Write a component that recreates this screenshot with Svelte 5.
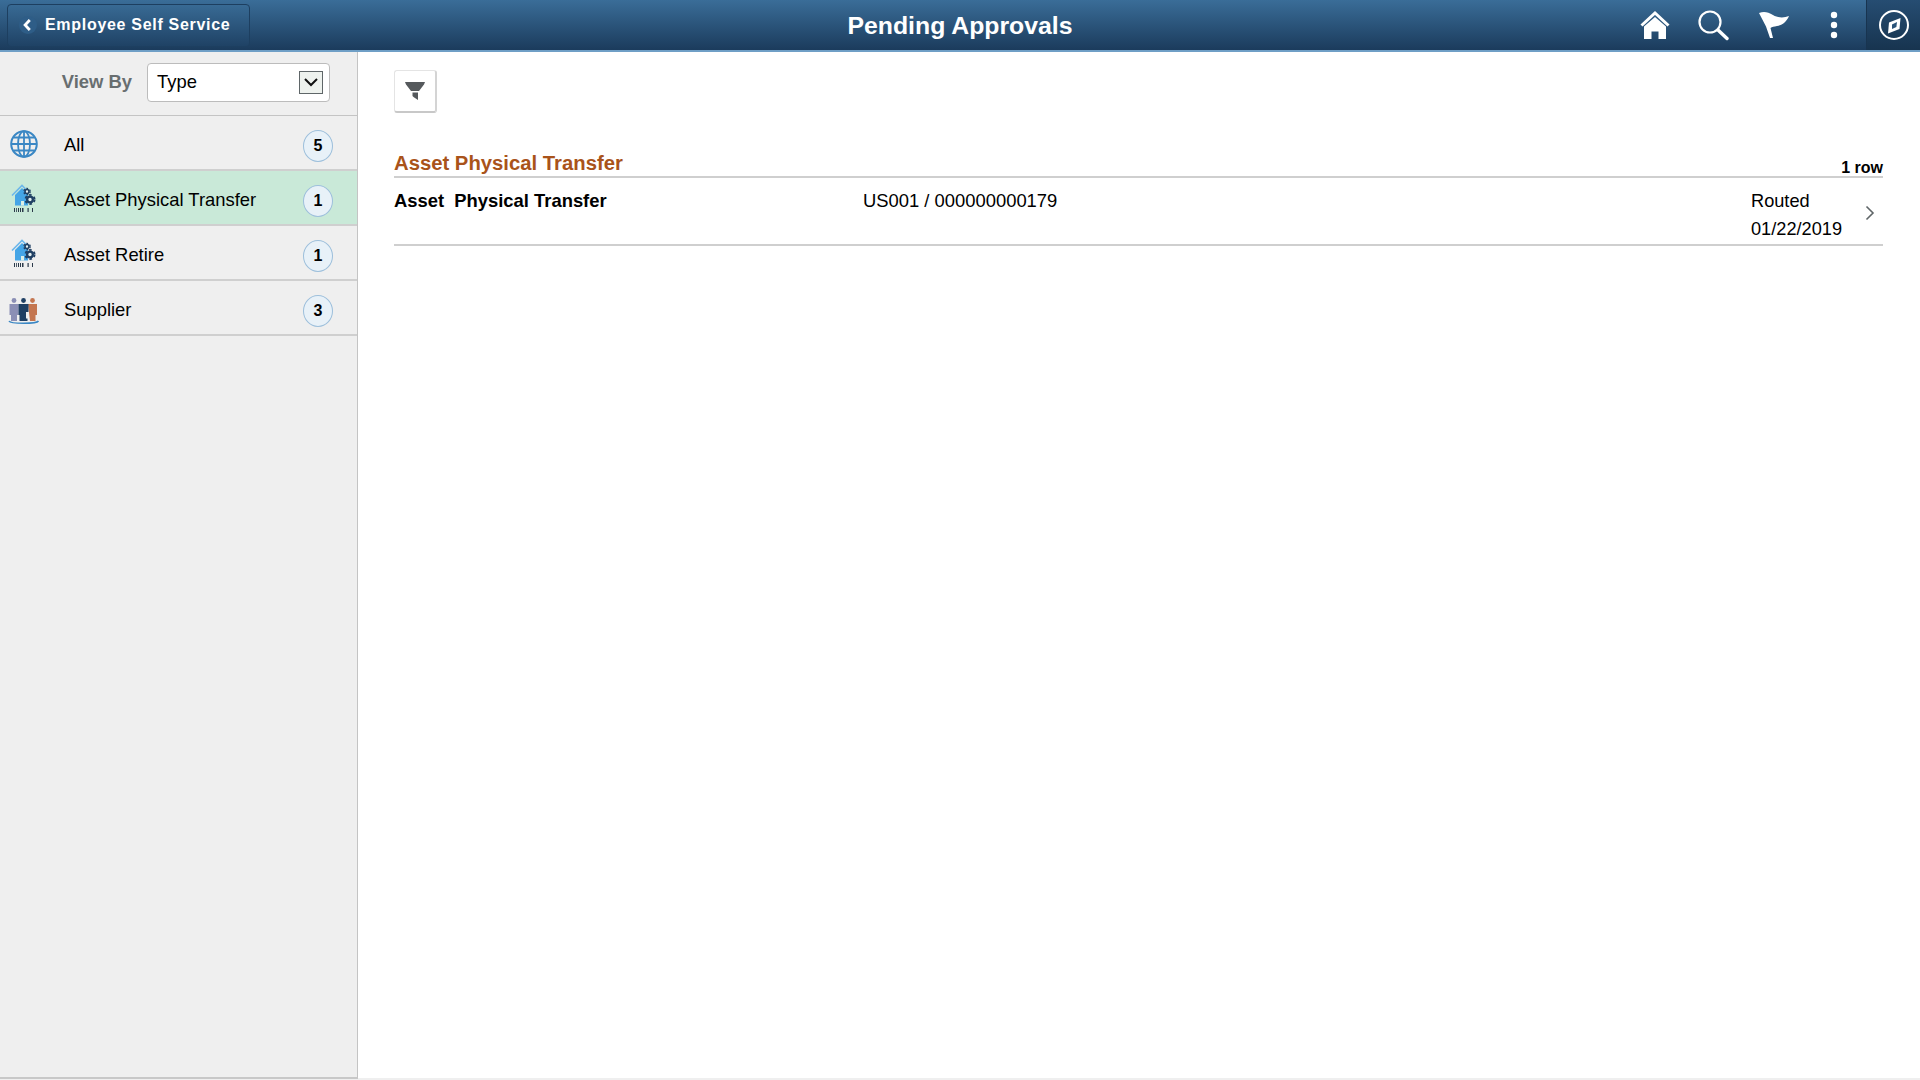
<script>
  const items = [
    { label: 'All', count: 5, icon: 'globe' },
    { label: 'Asset Physical Transfer', count: 1, icon: 'asset', active: true },
    { label: 'Asset Retire', count: 1, icon: 'asset' },
    { label: 'Supplier', count: 3, icon: 'people' }
  ]
</script>

{#snippet gear(cx, cy, r)}
  <circle {cx} {cy} r={r} fill="none" stroke="#1f3f63" stroke-width={r * 0.4} stroke-dasharray={r * 0.55} />
  <circle {cx} {cy} r={r * 0.62} fill="#e4eff0" stroke="#1f3f63" stroke-width={r * 0.5} />
{/snippet}

<div class="page">
  <header class="banner">
    <button class="back">
      <span class="back__dot">
        <svg width="10" height="12" viewBox="0 0 10 12"><path d="M6.800 1 2.100 6l4.700 5" fill="none" stroke="#fff" stroke-width="2.800" /></svg>
      </span>
      <span>Employee Self Service</span>
    </button>
    <h1 class="banner__title">Pending Approvals</h1>
    <div class="banner__actions">
      <svg class="act act--home" width="30" height="30" viewBox="0 0 30 30">
        <path d="M1.500 15.500 15 3l13.500 12.500" fill="none" stroke="#fff" stroke-width="3" />
        <path d="M4 16.500 15 7l11 9.500V29h-7.500v-7.500h-7V29H4z" fill="#fff" />
      </svg>
      <svg class="act act--search" width="32" height="32" viewBox="0 0 32 32">
        <circle cx="13" cy="13" r="10.500" fill="none" stroke="#fff" stroke-width="2.200" />
        <path d="m21 21 9 8.500" stroke="#fff" stroke-width="3.400" stroke-linecap="round" />
      </svg>
      <svg class="act act--flag" width="32" height="30" viewBox="0 0 32 30">
        <path d="M1 3C6 1 10 2 15 5c5 3 11 3 16 1-2 5-6 9-12 10-3 .5-5 1-6.500 2L15 28h-3L8 16.500z" fill="#fff" />
      </svg>
      <svg class="act act--dots" width="10" height="30" viewBox="0 0 10 30">
        <circle cx="5" cy="5" r="3.200" fill="#fff" />
        <circle cx="5" cy="15" r="3.200" fill="#fff" />
        <circle cx="5" cy="25" r="3.200" fill="#fff" />
      </svg>
      <div class="nav">
        <svg width="32" height="32" viewBox="0 0 32 32">
          <circle cx="16" cy="16" r="14" fill="none" stroke="#fff" stroke-width="2" />
          <path d="m22.500 9-1 11-11.500 4.500 1-11z" fill="#fff" />
          <path d="m14 15.500 5-2.500-.6 5-4.400 2z" fill="#2a5379" />
        </svg>
      </div>
    </div>
  </header>

  <div class="body">
    <aside class="side">
      <div class="viewby">
        <span class="viewby__label">View By</span>
        <div class="select">
          <span>Type</span>
          <span class="select__btn">
            <svg width="14" height="9" viewBox="0 0 14 9"><path d="m1 1 6 6 6-6" fill="none" stroke="#111" stroke-width="2" /></svg>
          </span>
        </div>
      </div>
      <ul class="list">
        {#each items as item}
          <li class="row" class:row--active={item.active}>
            <span class="row__icon">
              {#if item.icon === 'globe'}
                <svg width="30" height="30" viewBox="0 0 30 30" fill="none" stroke="#3a87c4" stroke-width="1.800">
                  <circle cx="15" cy="15" r="12.800" stroke-width="2" />
                  <ellipse cx="15" cy="15" rx="6" ry="12.800" />
                  <path d="M15 2v26M2.500 15h25M4.500 8.500h21M4.500 21.500h21" />
                </svg>
              {:else if item.icon === 'asset'}
                <svg width="30" height="30" viewBox="0 0 30 30">
                  <path d="M3 11.500 13 1.500l6 6" fill="none" stroke="#6db7ea" stroke-width="1.600" />
                  <path d="M6 11 13 4l6 6v11.500H6z" fill="#45a5e6" />
                  <path d="M12 21.500V17h3v4.500z" fill="#dcefe6" />
                  {@render gear(18, 7.500, 3.200)}
                  {@render gear(21, 15.500, 4.600)}
                  <path d="M5 24h1v4H5zM7 24h.8v4H7zM9 24h1v4H9zM11 24h1v4h-1zM13 24h1.500v4H13zM18.500 24h1.200v4h-1.200zM23 24h1v4h-1z" fill="#2b3a4a" />
                </svg>
              {:else}
                <svg width="32" height="30" viewBox="0 -2 32 30">
                  <circle cx="6" cy="4.500" r="2.400" fill="#8b8fb5" />
                  <circle cx="15.500" cy="4.500" r="2.400" fill="#1f3f63" />
                  <circle cx="24.500" cy="4.500" r="2.400" fill="#c47650" />
                  <path d="M1.500 8h9v11h-1.500v6h-6v-6h-1.500z" fill="#8b8fb5" />
                  <path d="M20 8h9v11h-1.500v6h-5.500z" fill="#c47650" />
                  <path d="M10.500 8h10v11h-1v6h-8v-6h-1z" fill="#1f3f63" />
                  <path d="M18 16h3v6.500h-3z" fill="#f0f0f0" />
                  <path d="M1 25c1.500 3 27.500 3 29.500 0" fill="none" stroke="#3a87c4" stroke-width="1.500" />
                </svg>
              {/if}
            </span>
            <span class="row__label">{item.label}</span>
            <span class="row__count">{item.count}</span>
          </li>
        {/each}
      </ul>
    </aside>

    <main class="main">
      <button class="filter">
        <svg width="20" height="18" viewBox="0 0 20 18">
          <path d="M0 0h20l-1 2.500-5 6.500H6L1 2.500zM7.500 10.500h5.500V18l-4.500-3-1-1z" fill="#55595c" />
        </svg>
      </button>
      <div class="group">
        <h2 class="group__title">Asset Physical Transfer</h2>
        <span class="group__count">1 row</span>
      </div>
      <div class="item">
        <div class="item__name">Asset&nbsp; Physical Transfer</div>
        <div class="item__ref">US001 / 000000000179</div>
        <div class="item__status">
          <div>Routed</div>
          <div>01/22/2019</div>
        </div>
        <svg class="item__chevron" width="10" height="16" viewBox="0 0 10 16">
          <path d="m1.500 1.500 6.500 6.500-6.500 6.500" fill="none" stroke="#5f6668" stroke-width="1.600" />
        </svg>
      </div>
    </main>
  </div>
</div>

<style>
  :global(body) {
    margin: 0;
    background: #fff;
  }

  .page {
    display: flex;
    flex-direction: column;
    width: 1920px;
    height: 1080px;
    overflow: hidden;
    font-family: "Liberation Sans", Arial, sans-serif;
    color: #000;
  }

  .banner {
    position: relative;
    display: flex;
    align-items: center;
    flex: none;
    height: 50px;
    background: linear-gradient(#3a6d98, #1b3b5c);
    border-bottom: 2px solid #6f9fc6;
  }

  .back {
    display: flex;
    align-items: center;
    gap: 8px;
    width: 243px;
    height: 43px;
    margin: 0 0 0 7px;
    padding: 0 0 0 11px;
    font-family: inherit;
    font-size: 16px;
    font-weight: 700;
    letter-spacing: 0.7px;
    color: #fff;
    background: linear-gradient(#386a94, #1f4265);
    border: 1px solid #1d3f60;
    border-radius: 4px;
  }

  .back__dot {
    display: flex;
    align-items: center;
    justify-content: center;
    width: 18px;
    height: 18px;
    border-radius: 50%;
    background: #2e5d87;
  }

  .banner__title {
    position: absolute;
    left: 0;
    right: 0;
    margin: 0;
    font-size: 24.8px;
    font-weight: 700;
    line-height: 49px;
    text-align: center;
    color: #fff;
    pointer-events: none;
  }

  .banner__actions {
    display: flex;
    align-items: center;
    height: 100%;
    margin-left: auto;
  }

  .act {
    display: block;
    flex: none;
  }

  .act--search {
    margin-left: 27px;
  }

  .act--flag {
    margin-left: 29px;
  }

  .act--dots {
    margin-left: 39px;
    margin-right: 27px;
  }

  .nav {
    display: flex;
    align-items: center;
    justify-content: center;
    width: 54px;
    height: 50px;
    background: linear-gradient(#264d72, #17344f);
    border-left: 1px solid #183450;
    box-sizing: border-box;
  }

  .body {
    display: flex;
    flex: 1;
    min-height: 0;
    border-bottom: 2px solid #efefef;
  }

  .side {
    flex: none;
    width: 358px;
    box-sizing: border-box;
    background: #efefef;
    border-right: 1px solid #c4c4c4;
    border-bottom: 2px solid #c8c8c8;
    margin-bottom: -1px;
  }

  .viewby {
    display: flex;
    align-items: center;
    height: 64px;
    padding-bottom: 3px;
    box-sizing: border-box;
    border-bottom: 1px solid #c4c4c4;
  }

  .viewby__label {
    width: 132px;
    font-size: 18.4px;
    font-weight: 700;
    text-align: right;
    color: #686e70;
  }

  .select {
    display: flex;
    align-items: center;
    justify-content: space-between;
    box-sizing: border-box;
    width: 183px;
    height: 39px;
    margin-left: 15px;
    padding: 0 6px 0 9px;
    font-size: 18.4px;
    background: #fff;
    border: 1px solid #bcbcbc;
    border-radius: 4px;
  }

  .select__btn {
    display: flex;
    align-items: center;
    justify-content: center;
    box-sizing: border-box;
    width: 24px;
    height: 23px;
    background: #eef2ee;
    border: 1px solid #5f6668;
  }

  .list {
    margin: 0;
    padding: 0;
    list-style: none;
  }

  .row {
    display: flex;
    align-items: center;
    box-sizing: border-box;
    height: 55px;
    padding-top: 5px;
    border-bottom: 2px solid #cfcfcf;
  }

  .row--active {
    background: #c9e9d8;
  }

  .row__icon {
    display: flex;
    justify-content: center;
    flex: none;
    width: 48px;
    margin: -2px 16px 0 0;
  }

  .row__label {
    flex: 1;
    font-size: 18.4px;
  }

  .row__count {
    display: flex;
    align-items: center;
    justify-content: center;
    box-sizing: border-box;
    width: 30px;
    height: 32px;
    margin: 2px 24px 0 0;
    font-size: 16px;
    font-weight: 700;
    background: #e8f1f8;
    border: 1px solid #9dbfdb;
    border-radius: 50%;
  }

  .main {
    flex: 1;
    box-sizing: border-box;
    padding: 18px 37px 0 36px;
  }

  .filter {
    display: flex;
    align-items: center;
    justify-content: center;
    box-sizing: border-box;
    width: 43px;
    height: 43px;
    padding: 0;
    background: #fff;
    border: 1px solid #e4e4e4;
    border-bottom: 2px solid #c8c8c8;
    border-right: 2px solid #d4d4d4;
    border-radius: 3px;
  }

  .group {
    display: flex;
    align-items: flex-end;
    justify-content: space-between;
    height: 45px;
    margin-top: 20px;
    box-sizing: border-box;
    border-bottom: 2px solid #cfcfcf;
  }

  .group__title {
    margin: 0;
    font-size: 20.3px;
    font-weight: 700;
    line-height: 26px;
    color: #a9531a;
  }

  .group__count {
    font-size: 16px;
    font-weight: 700;
    line-height: 16px;
  }

  .item {
    display: flex;
    align-items: center;
    height: 68px;
    box-sizing: border-box;
    border-bottom: 2px solid #cfcfcf;
    font-size: 18.4px;
  }

  .item__name {
    width: 469px;
    font-weight: 700;
    align-self: flex-start;
    padding-top: 12px;
  }

  .item__ref {
    flex: 1;
    align-self: flex-start;
    padding-top: 12px;
  }

  .item__status {
    width: 114px;
    padding-top: 8px;
    line-height: 28px;
    font-size: 18.2px;
  }

  .item__chevron {
    margin: 3px 8px 0 0;
  }
</style>
